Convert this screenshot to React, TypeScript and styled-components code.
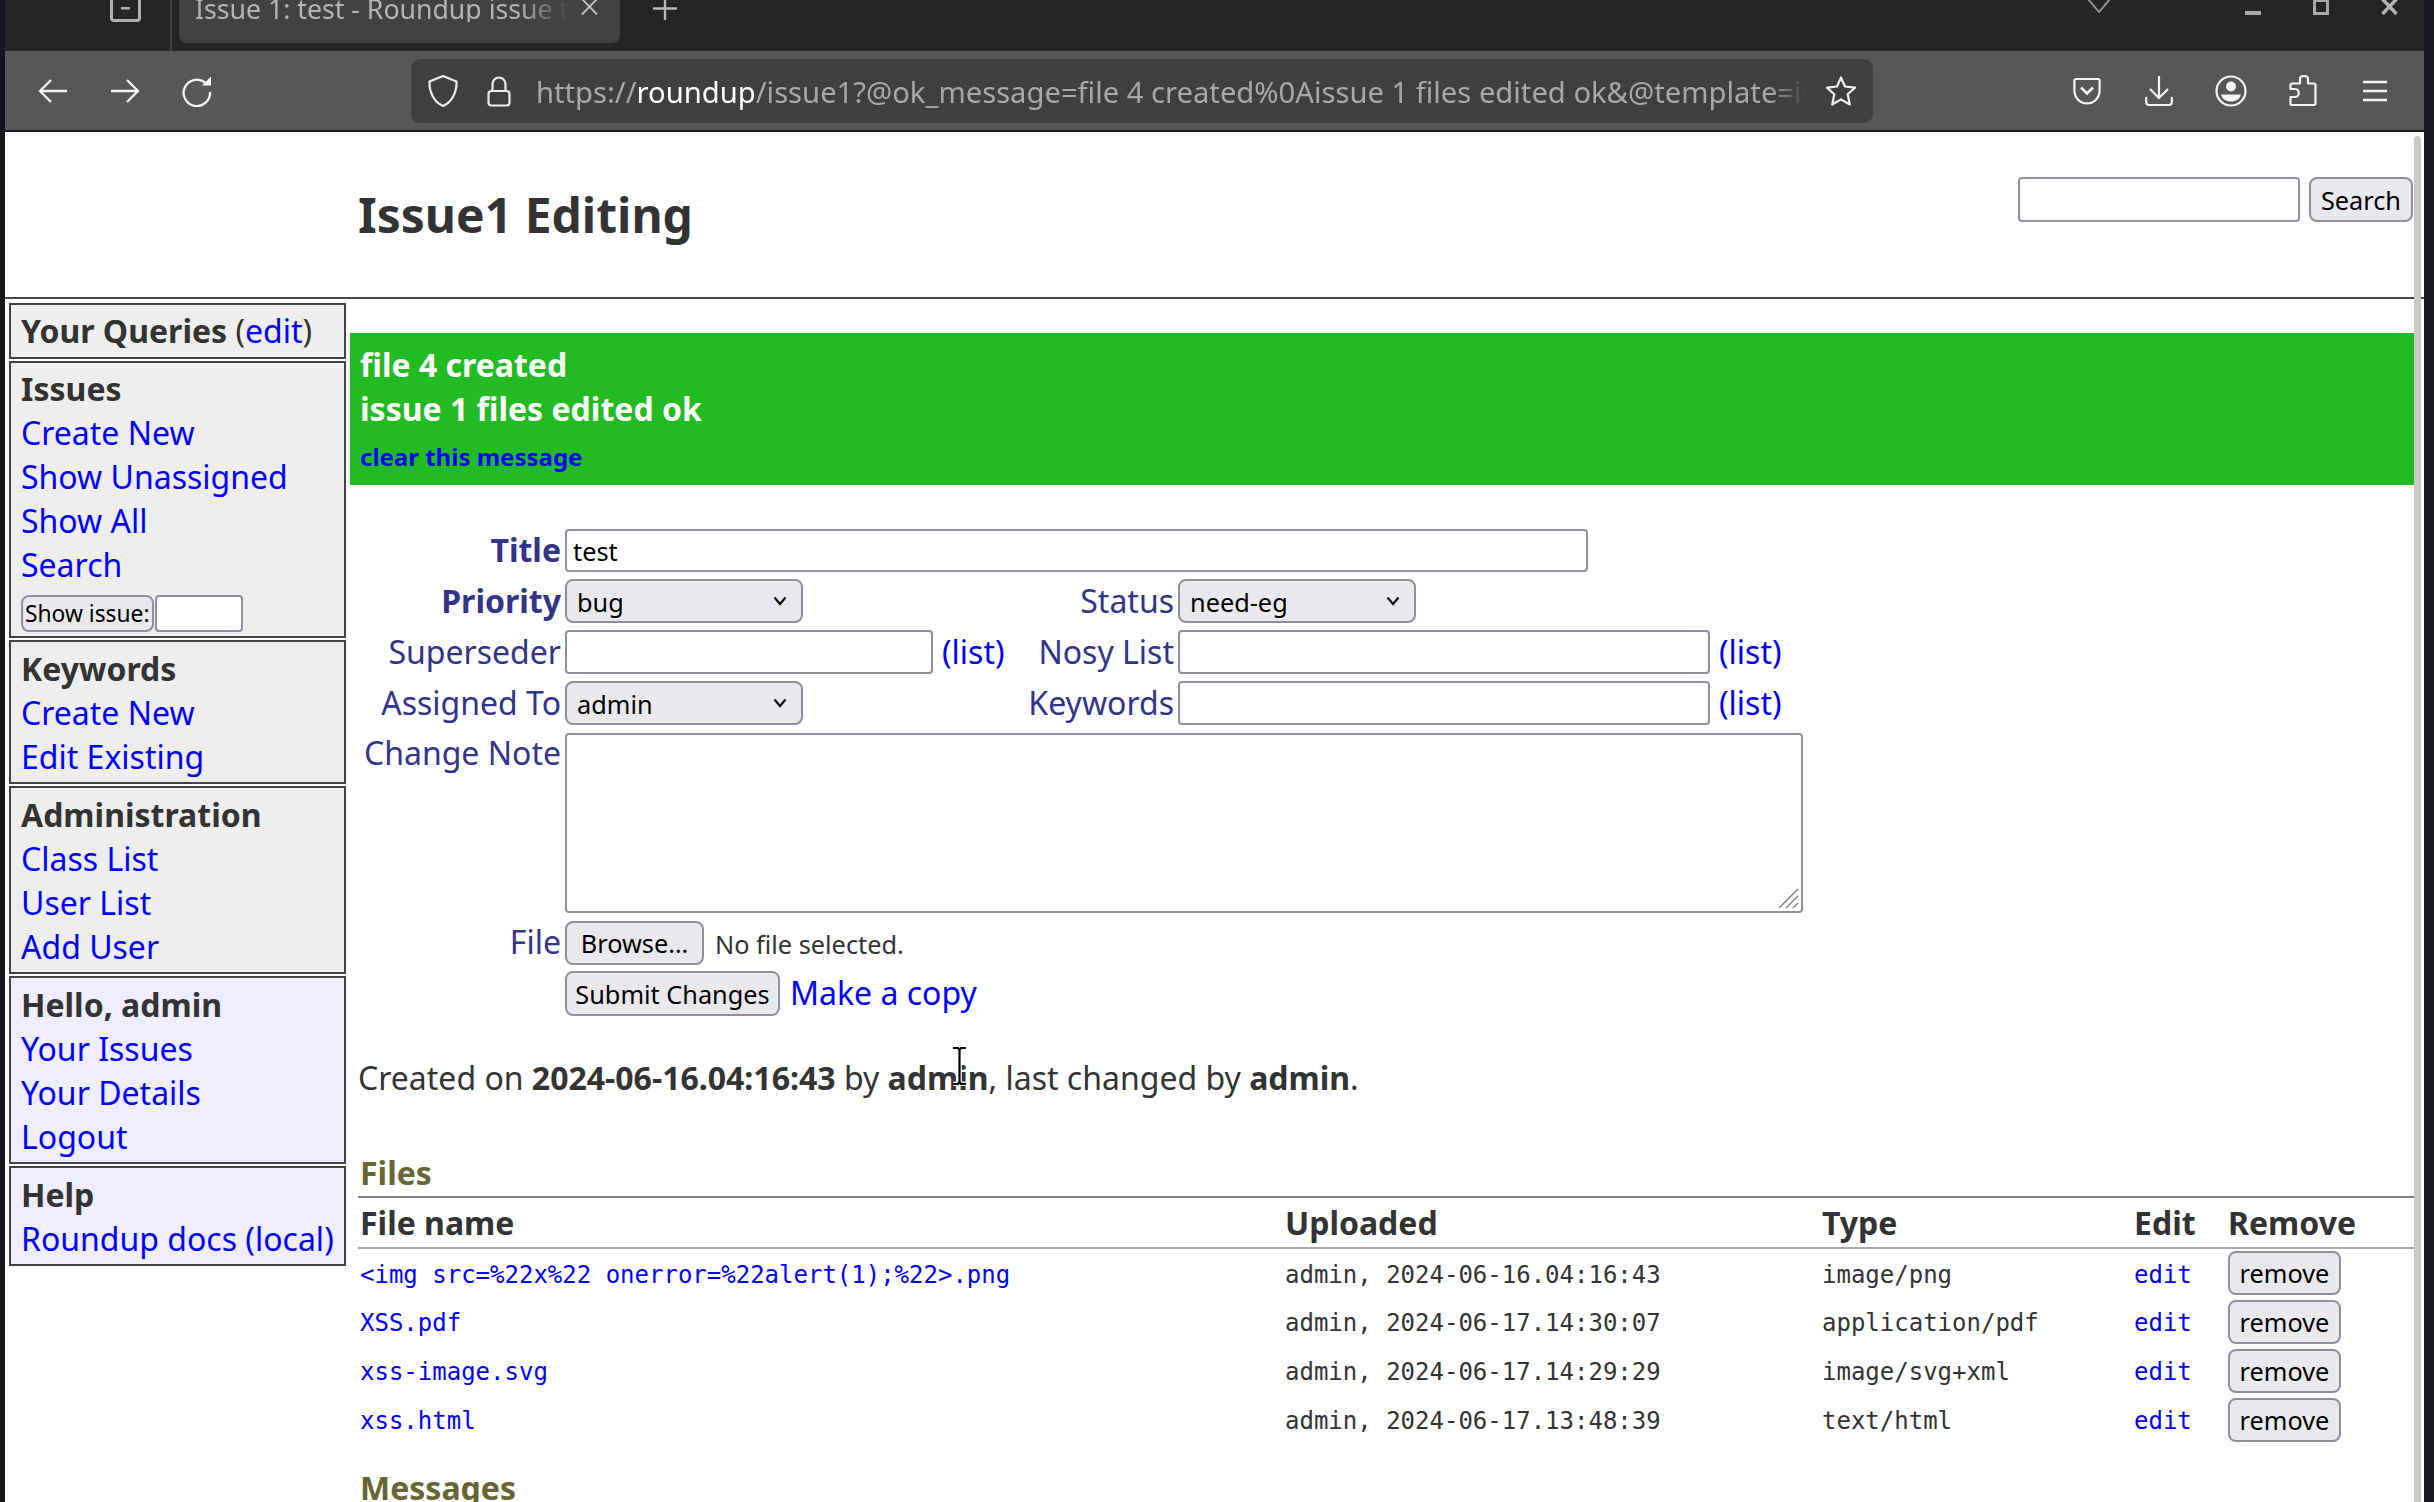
import React from "react";
import styled, { createGlobalStyle } from "styled-components";

const GlobalStyle = createGlobalStyle`
  html, body {
    margin: 0;
    padding: 0;
    background: #14161c;
  }
  * {
    box-sizing: border-box;
  }
`;

const FILES = [
  { name: '<img src=%22x%22 onerror=%22alert(1);%22>.png', uploaded: "admin, 2024-06-16.04:16:43", type: "image/png" },
  { name: "XSS.pdf", uploaded: "admin, 2024-06-17.14:30:07", type: "application/pdf" },
  { name: "xss-image.svg", uploaded: "admin, 2024-06-17.14:29:29", type: "image/svg+xml" },
  { name: "xss.html", uploaded: "admin, 2024-06-17.13:48:39", type: "text/html" },
];

function Chevron() {
  return (
    <SelectArrow width="14" height="10" viewBox="0 0 14 10">
      <path d="M1.5 1.5 L7 8 L12.5 1.5" fill="none" stroke="#111" strokeWidth="2.2" />
    </SelectArrow>
  );
}

export default function App() {
  return (
    <Screen>
      <GlobalStyle />
      <Window>
        <TitleBar>
          <TabsIcon width="31" height="22" viewBox="0 0 31 22">
            <path d="M1.5 0 V18 a2.5 2.5 0 0 0 2.5 2.5 H27 a2.5 2.5 0 0 0 2.5 -2.5 V0" fill="none" stroke="#b0b0b0" strokeWidth="3" />
            <rect x="11" y="7" width="9" height="2.5" fill="#b0b0b0" />
          </TabsIcon>
          <TabDivider />
          <Tab>
            <TabTitle>Issue 1: test - Roundup issue tracker</TabTitle>
            <TabClose width="17" height="15" viewBox="0 0 17 15">
              <path d="M1 -1 L16 14.5 M16 -1 L1 14.5" stroke="#c4c4c4" strokeWidth="1.8" fill="none" />
            </TabClose>
          </Tab>
          <NewTab width="24" height="20" viewBox="0 0 24 20">
            <path d="M0 8.5 H24 M12 0 V20" stroke="#b8b8b8" strokeWidth="2.4" fill="none" />
          </NewTab>
          <TitleSpacer />
          <TabList width="24" height="13" viewBox="0 0 24 13">
            <path d="M1 -1 L12 12 L23 -1" stroke="#9a9a9a" strokeWidth="1.8" fill="none" />
          </TabList>
          <Minimize />
          <Maximize />
          <WindowClose width="17" height="15" viewBox="0 0 17 15">
            <path d="M1.5 -1 L15.5 14 M15.5 -1 L1.5 14" stroke="#b4b4b4" strokeWidth="3.4" fill="none" />
          </WindowClose>
        </TitleBar>

        <Toolbar>
          <ToolButton>
            <svg width="32" height="32" viewBox="0 0 32 32" fill="none" stroke="#f4f4f4" strokeWidth="2.3">
              <path d="M30 16 H4 M14 5 L3 16 L14 27" />
            </svg>
          </ToolButton>
          <ToolButton>
            <svg width="32" height="32" viewBox="0 0 32 32" fill="none" stroke="#f4f4f4" strokeWidth="2.3">
              <path d="M2 16 H28 M18 5 L29 16 L18 27" />
            </svg>
          </ToolButton>
          <ToolButton>
            <svg width="32" height="32" viewBox="0 0 32 32" fill="none" stroke="#f4f4f4" strokeWidth="2.3">
              <path d="M24 7.5 A13.2 13.2 0 1 0 29 17" />
              <path d="M21 10.5 H30 V1.5 Z" fill="#f4f4f4" stroke="none" />
            </svg>
          </ToolButton>
          <UrlBar>
            <svg width="32" height="34" viewBox="0 0 32 34" fill="none" stroke="#ececec" strokeWidth="2.2">
              <path d="M16 2 L29.5 7.5 C30 18 25 28 16 32 C7 28 2 18 2.5 7.5 Z" strokeLinejoin="round" />
            </svg>
            <LockIcon width="24" height="32" viewBox="0 0 24 32" fill="none" stroke="#ececec" strokeWidth="2.2">
              <rect x="1.5" y="16" width="21" height="14.5" rx="3" />
              <path d="M5.5 16 V9 a6.5 6.5 0 0 1 13 0 V16" />
            </LockIcon>
            <UrlText>
              https://<UrlHost>roundup</UrlHost>/issue1?@ok_message=file 4 created%0Aissue 1 files edited ok&amp;@template=item
            </UrlText>
            <StarIcon width="32" height="32" viewBox="0 0 32 32" fill="none" stroke="#f0f0f0" strokeWidth="2.2">
              <path d="M16 2.5 L20 11.5 L30 12.7 L22.7 19.3 L24.8 29.5 L16 24.4 L7.2 29.5 L9.3 19.3 L2 12.7 L12 11.5 Z" strokeLinejoin="round" />
            </StarIcon>
          </UrlBar>
          <ToolSpacer />
          <ToolButton>
            <svg width="28" height="28" viewBox="0 0 28 28" fill="none" stroke="#f4f4f4" strokeWidth="2.2">
              <path d="M3 2 H25 a1.6 1.6 0 0 1 1.6 1.6 V13 C26.6 21 21 26.4 14 26.4 C7 26.4 1.4 21 1.4 13 V3.6 A1.6 1.6 0 0 1 3 2 Z" />
              <path d="M8 10.5 L14 16.5 L20 10.5" strokeWidth="2.6" />
            </svg>
          </ToolButton>
          <ToolButton>
            <svg width="28" height="32" viewBox="0 0 28 32" fill="none" stroke="#f4f4f4" strokeWidth="2.2">
              <path d="M14 1 V23 M5 14 L14 23 L23 14" />
              <path d="M1.2 22 V27 a3 3 0 0 0 3 3 H23.8 a3 3 0 0 0 3 -3 V22" />
            </svg>
          </ToolButton>
          <ToolButton>
            <svg width="32" height="32" viewBox="0 0 32 32" fill="none" stroke="#f4f4f4" strokeWidth="2.2">
              <ellipse cx="16" cy="16" rx="14.5" ry="14.5" />
              <circle cx="16" cy="11.5" r="5" fill="#f4f4f4" stroke="none" />
              <path d="M6 19.5 H26 C25 24 21 26.5 16 26.5 C11 26.5 7 24 6 19.5 Z" fill="#f4f4f4" stroke="none" />
            </svg>
          </ToolButton>
          <ToolButton>
            <svg width="28" height="33" viewBox="0 0 28 33" fill="none" stroke="#f4f4f4" strokeWidth="2.2">
              <path d="M2 31 H25 a1.5 1.5 0 0 0 1.5 -1.5 V11 a1.5 1.5 0 0 0 -1.5 -1.5 H19 V5 C19 1 11 1 11 5 V9.5 H3 a1.5 1.5 0 0 0 -1.5 1.5 V15 H6 C11 15 11 23 6 23 H1.5 V29.5 A1.5 1.5 0 0 0 2 31 Z" strokeLinejoin="round" />
            </svg>
          </ToolButton>
          <ToolButton>
            <svg width="26" height="22" viewBox="0 0 26 22" stroke="#f4f4f4" strokeWidth="2.3">
              <path d="M1 2 H25 M1 11 H25 M1 20 H25" />
            </svg>
          </ToolButton>
        </Toolbar>

        <Page>
          <PageHeader>
            <PageTitle>Issue1 Editing</PageTitle>
            <SearchForm>
              <SearchInput type="text" />
              <FormButton type="button">Search</FormButton>
            </SearchForm>
          </PageHeader>

          <Body>
            <Sidebar>
              <SideBox>
                <SideHead>Your Queries</SideHead> (<a href="#q">edit</a>)
              </SideBox>
              <SideBox>
                <SideHead>Issues</SideHead>
                <SideLink href="#1">Create New</SideLink>
                <SideLink href="#2">Show Unassigned</SideLink>
                <SideLink href="#3">Show All</SideLink>
                <SideLink href="#4">Search</SideLink>
                <ShowIssueRow>
                  <ShowIssueButton type="button">Show issue:</ShowIssueButton>
                  <ShowIssueInput type="text" />
                </ShowIssueRow>
              </SideBox>
              <SideBox $low>
                <SideHead>Keywords</SideHead>
                <SideLink href="#5">Create New</SideLink>
                <SideLink href="#6">Edit Existing</SideLink>
              </SideBox>
              <SideBox $low>
                <SideHead>Administration</SideHead>
                <SideLink href="#7">Class List</SideLink>
                <SideLink href="#8">User List</SideLink>
                <SideLink href="#9">Add User</SideLink>
              </SideBox>
              <SideBox $user $low>
                <SideHead>Hello, admin</SideHead>
                <SideLink href="#10">Your Issues</SideLink>
                <SideLink href="#11">Your Details</SideLink>
                <SideLink href="#12">Logout</SideLink>
              </SideBox>
              <SideBox $user $low>
                <SideHead>Help</SideHead>
                <SideLink href="#13">
                  Roundup docs <Plain>(</Plain>local<Plain>)</Plain>
                </SideLink>
              </SideBox>
            </Sidebar>

            <Content>
              <OkMessage>
                <OkLine>file 4 created</OkLine>
                <OkLine>issue 1 files edited ok</OkLine>
                <ClearLink href="#clear">clear this message</ClearLink>
              </OkMessage>

              <FormGrid>
                <FieldLabel $required>Title</FieldLabel>
                <WideCell>
                  <TitleInput type="text" defaultValue="test" />
                </WideCell>

                <FieldLabel $required>Priority</FieldLabel>
                <Cell>
                  <SelectBox $width={238}>
                    bug
                    <Chevron />
                  </SelectBox>
                </Cell>
                <FieldLabel>Status</FieldLabel>
                <Cell>
                  <SelectBox $width={238}>
                    need-eg
                    <Chevron />
                  </SelectBox>
                </Cell>

                <FieldLabel>Superseder</FieldLabel>
                <Cell>
                  <TextInput type="text" $width={368} />
                  <ListLink href="#s">(list)</ListLink>
                </Cell>
                <FieldLabel>Nosy List</FieldLabel>
                <Cell>
                  <TextInput type="text" $width={532} />
                  <ListLink href="#n">(list)</ListLink>
                </Cell>

                <FieldLabel>Assigned To</FieldLabel>
                <Cell>
                  <SelectBox $width={238}>
                    admin
                    <Chevron />
                  </SelectBox>
                </Cell>
                <FieldLabel>Keywords</FieldLabel>
                <Cell>
                  <TextInput type="text" $width={532} />
                  <ListLink href="#k">(list)</ListLink>
                </Cell>

                <FieldLabel $top>Change Note</FieldLabel>
                <WideCell>
                  <NoteWrap>
                    <NoteArea />
                    <Resizer width="21" height="21" viewBox="0 0 21 21" stroke="#777" strokeWidth="1.2">
                      <path d="M1 20 L20 1 M8 20 L20 8 M15 20 L20 15" />
                    </Resizer>
                  </NoteWrap>
                </WideCell>

                <FieldLabel>File</FieldLabel>
                <WideCell>
                  <BrowseButton type="button">Browse…</BrowseButton>
                  <NoFile>No file selected.</NoFile>
                </WideCell>

                <span />
                <WideCell>
                  <SubmitButton type="button">Submit Changes</SubmitButton>
                  <CopyLink href="#copy">Make a copy</CopyLink>
                </WideCell>
              </FormGrid>

              <CreatedLine>
                Created on <b>2024-06-16.04:16:43</b> by <b>admin</b>, last changed by <b>admin</b>.
              </CreatedLine>

              <SectionTitle>Files</SectionTitle>
              <FilesTable>
                <colgroup>
                  <col style={{ width: 925 }} />
                  <col style={{ width: 537 }} />
                  <col style={{ width: 312 }} />
                  <col style={{ width: 94 }} />
                  <col />
                </colgroup>
                <thead>
                  <tr>
                    <HeadCell>File name</HeadCell>
                    <HeadCell>Uploaded</HeadCell>
                    <HeadCell>Type</HeadCell>
                    <HeadCell>Edit</HeadCell>
                    <HeadCell>Remove</HeadCell>
                  </tr>
                </thead>
                <tbody>
                  {FILES.map((f) => (
                    <tr key={f.name}>
                      <MonoCell>
                        <a href="#f">{f.name}</a>
                      </MonoCell>
                      <MonoCell>{f.uploaded}</MonoCell>
                      <MonoCell>{f.type}</MonoCell>
                      <MonoCell>
                        <a href="#e">edit</a>
                      </MonoCell>
                      <ButtonCell>
                        <RemoveButton type="button">remove</RemoveButton>
                      </ButtonCell>
                    </tr>
                  ))}
                </tbody>
              </FilesTable>

              <MessagesTitle>Messages</MessagesTitle>
            </Content>
          </Body>
          <Scrollbar />
          <TextCursor width="19" height="40" viewBox="0 0 19 40">
            <path d="M3 2 H8 L9.5 4 L11 2 H16 M9.5 4 V36 M3 38 H8 L9.5 36 L11 38 H16" fill="none" stroke="#fff" strokeWidth="5" opacity="0.85" />
            <path d="M3 2 H8 L9.5 4 L11 2 H16 M9.5 4 V36 M3 38 H8 L9.5 36 L11 38 H16" fill="none" stroke="#000" strokeWidth="2.2" />
          </TextCursor>
        </Page>
      </Window>
    </Screen>
  );
}

const Screen = styled.div`
  width: 2434px;
  height: 1502px;
  overflow: hidden;
  background: #14161c;
  padding: 0 10px 0 5px;
`;

const Window = styled.div`
  display: flex;
  flex-direction: column;
  height: 100%;
`;

const TitleBar = styled.div`
  display: flex;
  align-items: flex-start;
  flex: none;
  height: 51px;
  background: #252525;
  font-family: "Noto Sans", sans-serif;
`;

const TabsIcon = styled.svg`
  margin-left: 105px;
  flex: none;
`;

const TabDivider = styled.div`
  width: 2px;
  height: 51px;
  margin-left: 29px;
  background: #444;
`;

const Tab = styled.div`
  position: relative;
  display: flex;
  width: 441px;
  height: 43px;
  margin-left: 7px;
  padding-left: 16px;
  background: #424242;
  border-radius: 0 0 8px 8px;
`;

const TabTitle = styled.div`
  width: 385px;
  height: 30px;
  overflow: hidden;
  white-space: nowrap;
  margin-top: -8px;
  font-size: 26.67px;
  line-height: 34px;
  color: #b4b4b4;
  -webkit-mask-image: linear-gradient(to right, #000 84%, transparent 97%);
  mask-image: linear-gradient(to right, #000 84%, transparent 97%);
`;

const TabClose = styled.svg`
  position: absolute;
  left: 402px;
  top: 0;
`;

const NewTab = styled.svg`
  margin-left: 33px;
`;

const TitleSpacer = styled.div`
  flex: 1;
`;

const TabList = styled.svg`
  margin-right: 134px;
`;

const Minimize = styled.div`
  width: 16px;
  height: 4px;
  margin-top: 11px;
  margin-right: 52px;
  background: #a8a8a8;
`;

const Maximize = styled.div`
  width: 16px;
  height: 16px;
  margin-top: -1px;
  margin-right: 52px;
  border: 3px solid #a8a8a8;
`;

const WindowClose = styled.svg`
  margin-right: 26px;
`;

const Toolbar = styled.div`
  display: flex;
  align-items: center;
  flex: none;
  height: 81px;
  padding: 0 13px 0 12px;
  background: #575757;
  border-bottom: 2px solid #1d1d1d;
`;

const ToolButton = styled.div`
  display: flex;
  align-items: center;
  justify-content: center;
  flex: none;
  width: 72px;
`;

const UrlBar = styled.div`
  display: flex;
  align-items: center;
  flex: none;
  width: 1462px;
  height: 64px;
  margin-left: 178px;
  padding: 0 16px;
  background: #3f3f3f;
  border-radius: 9px;
  font-family: "Noto Sans", sans-serif;
`;

const LockIcon = styled.svg`
  flex: none;
  margin-left: 28px;
`;

const UrlText = styled.div`
  flex: 1;
  min-width: 0;
  margin-left: 25px;
  padding-top: 2px;
  overflow: hidden;
  white-space: nowrap;
  font-size: 29.2px;
  color: #a8a8a8;
  -webkit-mask-image: linear-gradient(to right, #000 97%, transparent 100%);
  mask-image: linear-gradient(to right, #000 97%, transparent 100%);
`;

const UrlHost = styled.span`
  color: #fff;
`;

const StarIcon = styled.svg`
  flex: none;
  margin-left: 18px;
`;

const ToolSpacer = styled.div`
  flex: 1;
`;

const Page = styled.div`
  position: relative;
  flex: 1;
  min-height: 0;
  overflow: hidden;
  background: #fff;
  color: #333;
  font-family: "Noto Sans", sans-serif;
  font-size: 32px;
  line-height: 44px;

  a {
    color: #00f;
    text-decoration: none;
  }
`;

const PageHeader = styled.div`
  display: flex;
  justify-content: space-between;
  align-items: flex-start;
  height: 167px;
  padding: 45px 11px 0 353px;
  border-bottom: 2px solid #444;
`;

const PageTitle = styled.h1`
  margin: 5px 0 0;
  font-size: 48px;
  line-height: 66px;
  font-weight: 700;
  color: #333;
`;

const SearchForm = styled.div`
  display: flex;
  gap: 9px;
`;

const controlBase = `
  height: 45px;
  background: #fff;
  border: 2px solid #8f8f9d;
  border-radius: 4px;
  outline: none;
  font-family: "Noto Sans", sans-serif;
  font-size: 25.3px;
  color: #000;
`;

const SearchInput = styled.input`
  ${controlBase}
  width: 282px;
`;

const FormButton = styled.button`
  ${controlBase}
  height: 45px;
  padding: 0 10px;
  background: #e9e9ed;
  border-radius: 8px;
  line-height: 36px;
  white-space: nowrap;
`;

const BrowseButton = styled(FormButton)`
  width: 139px;
  height: 44px;
  margin-top: 1px;
  padding: 0;
`;

const SubmitButton = styled(FormButton)`
  width: 215px;
  padding: 0;
`;

const Body = styled.div`
  display: flex;
  align-items: flex-start;
  padding: 4px 8px 0 4px;
`;

const Sidebar = styled.div`
  display: flex;
  flex-direction: column;
  flex: none;
  gap: 2px;
  width: 337px;
`;

const SideBox = styled.div<{ $user?: boolean; $low?: boolean }>`
  padding: ${(p) => (p.$low ? "5px 10px 3px" : "4px 10px")};
  border: 2px solid #444;
  background: ${(p) => (p.$user ? "#eeeeff" : "#eeeeee")};
  white-space: nowrap;
`;

const SideHead = styled.b`
  color: #333;
`;

const SideLink = styled.a`
  display: block;
`;

const Plain = styled.span`
  color: #00f;
`;

const ShowIssueRow = styled.div`
  display: flex;
  align-items: flex-end;
  gap: 1px;
  height: 45px;
`;

const ShowIssueButton = styled.button`
  ${controlBase}
  height: 37px;
  padding: 0 2px;
  background: #e9e9ed;
  border-radius: 8px;
  font-size: 22.8px;
  line-height: 30px;
  white-space: nowrap;
`;

const ShowIssueInput = styled.input`
  ${controlBase}
  width: 88px;
  height: 37px;
`;

const Content = styled.div`
  flex: 1;
  min-width: 0;
  margin-left: 4px;
  padding-top: 30px;
`;

const OkMessage = styled.div`
  height: 152px;
  padding: 10px 10px 0;
  background: #22bb22;
  color: #fff;
  font-weight: 700;
`;

const OkLine = styled.div`
  line-height: 44px;
`;

const ClearLink = styled.a`
  display: block;
  margin-top: 8px;
  font-size: 24px;
  line-height: 36px;
`;

const FormGrid = styled.div`
  display: grid;
  grid-template-columns: 210px 454px 149px 1fr;
  grid-template-rows: 43px 44px 44px 44px 181px 44px 45px;
  column-gap: 5px;
  row-gap: 7px;
  margin-top: 44px;
`;

const FieldLabel = styled.div<{ $required?: boolean; $top?: boolean }>`
  align-self: ${(p) => (p.$top ? "start" : "center")};
  margin-top: -1px;
  margin-right: -1px;
  text-align: right;
  white-space: nowrap;
  font-weight: ${(p) => (p.$required ? 700 : 400)};
  color: #333388;
`;

const Cell = styled.div`
  display: flex;
  align-items: center;
`;

const WideCell = styled(Cell)`
  grid-column: 2 / 5;
`;

const TextInput = styled.input<{ $width: number }>`
  ${controlBase}
  width: ${(p) => p.$width}px;
  height: 44px;
`;

const TitleInput = styled.input`
  ${controlBase}
  width: 1023px;
  height: 43px;
  padding: 0 6px;
`;

const SelectBox = styled.div<{ $width: number }>`
  ${controlBase}
  position: relative;
  display: flex;
  align-items: center;
  width: ${(p) => p.$width}px;
  height: 44px;
  padding: 2px 10px 0;
  background: #e9e9ed;
  border-radius: 8px;
`;

const SelectArrow = styled.svg`
  position: absolute;
  right: 14px;
  top: 15px;
`;

const ListLink = styled.a`
  margin-left: 9px;
`;

const NoteWrap = styled.div`
  position: relative;
  align-self: flex-start;
  width: 1238px;
  height: 180px;
  margin-top: 1px;
`;

const NoteArea = styled.textarea`
  ${controlBase}
  display: block;
  width: 100%;
  height: 100%;
  resize: none;
`;

const Resizer = styled.svg`
  position: absolute;
  right: 4px;
  bottom: 4px;
`;

const NoFile = styled.span`
  margin: 3px 0 0 11px;
  font-size: 25.3px;
  color: #333;
`;

const CopyLink = styled.a`
  margin: -2px 0 0 10px;
`;

const CreatedLine = styled.div`
  margin: 40px 0 0 8px;
`;

const SectionTitle = styled.h2`
  height: 47px;
  margin: 51px 0 0 8px;
  padding-left: 2px;
  border-bottom: 2px solid #808080;
  font-size: 32px;
  line-height: 44px;
  font-weight: 700;
  color: #666633;
`;

const MessagesTitle = styled.h2`
  margin: 22px 0 0 10px;
  font-size: 32px;
  line-height: 44px;
  font-weight: 700;
  color: #666633;
`;

const FilesTable = styled.table`
  width: calc(100% - 8px);
  margin-left: 8px;
  border-collapse: collapse;
  table-layout: fixed;
`;

const HeadCell = styled.th`
  height: 50px;
  padding: 0 2px;
  border-bottom: 2px solid #aaaaaa;
  text-align: left;
  font-weight: 700;
  color: #333;
`;

const MonoCell = styled.td`
  height: 49px;
  padding: 3px 2px 0;
  font-family: "DejaVu Sans Mono", monospace;
  font-size: 24px;
  line-height: 30px;
  color: #333;
  white-space: nowrap;
`;

const ButtonCell = styled.td`
  height: 49px;
  padding: 0 2px;
`;

const RemoveButton = styled.button`
  ${controlBase}
  display: block;
  width: 113px;
  height: 44px;
  padding: 0;
  background: #e9e9ed;
  border-radius: 8px;
`;

const Scrollbar = styled.div`
  position: absolute;
  top: 4px;
  bottom: 0;
  left: 2409px;
  width: 7px;
  background: #c8c8c8;
  border-radius: 4px 4px 0 0;
`;

const TextCursor = styled.svg`
  position: absolute;
  left: 945px;
  top: 914px;
`;
